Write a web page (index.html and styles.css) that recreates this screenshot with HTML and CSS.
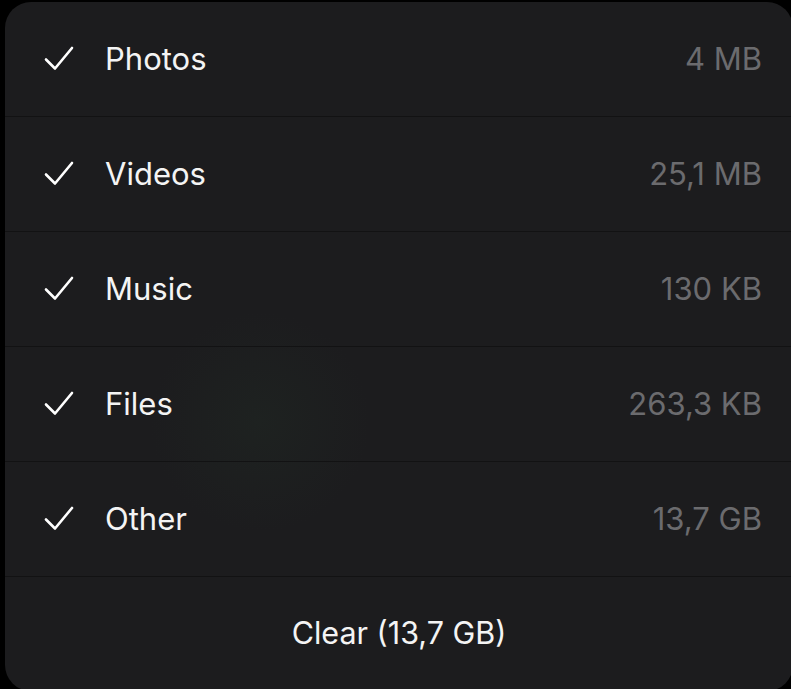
FILE: index.html
```html
<!DOCTYPE html>
<html lang="en">

<head>
    <meta charset="UTF-8">
    <meta name="viewport" content="width=device-width, initial-scale=1.0">
    <title>Clear Cache</title>
    <link rel="stylesheet" href="styles.css">
</head>

<body>
    <div class="sheet">
        <ul class="list">
            <li class="row">
                <svg class="check" viewBox="0 0 30 26"><path d="M2 13.5 L11 22.5 L28 2" /></svg>
                <span class="name">Photos</span>
                <span class="size">4 MB</span>
            </li>
            <li class="row">
                <svg class="check" viewBox="0 0 30 26"><path d="M2 13.5 L11 22.5 L28 2" /></svg>
                <span class="name">Videos</span>
                <span class="size">25,1 MB</span>
            </li>
            <li class="row">
                <svg class="check" viewBox="0 0 30 26"><path d="M2 13.5 L11 22.5 L28 2" /></svg>
                <span class="name">Music</span>
                <span class="size">130 KB</span>
            </li>
            <li class="row">
                <svg class="check" viewBox="0 0 30 26"><path d="M2 13.5 L11 22.5 L28 2" /></svg>
                <span class="name">Files</span>
                <span class="size">263,3 KB</span>
            </li>
            <li class="row">
                <svg class="check" viewBox="0 0 30 26"><path d="M2 13.5 L11 22.5 L28 2" /></svg>
                <span class="name">Other</span>
                <span class="size">13,7 GB</span>
            </li>
        </ul>
        <button class="clear">Clear (13,7 GB)</button>
    </div>
</body>

</html>
```

FILE: styles.css
```css
body {
    margin: 0;
    padding: 0;
    background-color: #000;
    font-family: Inter, "Noto Sans", sans-serif;
    overflow: hidden;
}

.sheet {
    margin: 2px 0 0 5px;
    width: 788px;
    height: 689px;
    border-radius: 26px;
    background-color: #1c1c1e;
    background-image: radial-gradient(circle at 255px 420px, rgba(36, 52, 40, 0.25), rgba(28, 28, 30, 0) 110px);
    overflow: hidden;
}

.list {
    list-style-type: none;
    margin: 0;
    padding: 0;
}

.row {
    display: flex;
    align-items: center;
    height: 113px;
    padding: 0 31px 1px 39px;
    border-bottom: 1px solid #121213;
}

.check {
    width: 30px;
    height: 26px;
    margin-right: 31px;
    fill: none;
    stroke: #fff;
    stroke-width: 2.6;
    stroke-linecap: round;
    stroke-linejoin: round;
}

.name {
    flex: 1;
    color: #f4f4f4;
    font-size: 31px;
}

.size {
    color: #6b6b6e;
    font-size: 31px;
}

.clear {
    display: block;
    width: 100%;
    height: 112px;
    padding: 0 0 1px 0;
    border: none;
    background: none;
    color: #f4f4f4;
    font-family: inherit;
    font-size: 30.5px;
    text-align: center;
}
```
